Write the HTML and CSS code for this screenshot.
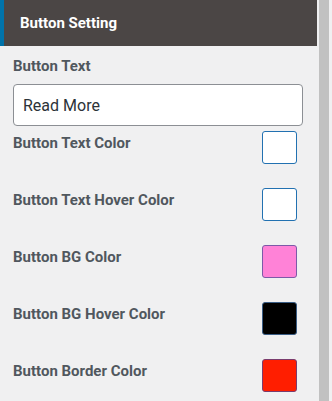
FILE: index.html
```html
<!DOCTYPE html>
<html>
<head>
    <title>Button Setting</title>
    <link rel="stylesheet" href="styles.css">
</head>
<body>
    <div class="panel">
        <div class="panel-head">Button Setting</div>
        <div class="panel-body">
            <label class="field-label" for="btnText">Button Text</label>
            <input id="btnText" class="text-input" value="Read More">

            <div class="color-row">
                <span class="field-label">Button Text Color</span>
                <span class="swatch swatch-white"></span>
            </div>
            <div class="color-row">
                <span class="field-label">Button Text Hover Color</span>
                <span class="swatch swatch-white"></span>
            </div>
            <div class="color-row">
                <span class="field-label">Button BG Color</span>
                <span class="swatch swatch-pink"></span>
            </div>
            <div class="color-row">
                <span class="field-label">Button BG Hover Color</span>
                <span class="swatch swatch-black"></span>
            </div>
            <div class="color-row">
                <span class="field-label">Button Border Color</span>
                <span class="swatch swatch-red"></span>
            </div>
        </div>
    </div>
    <div class="scrollbar"></div>
</body>
</html>
```

FILE: styles.css
```css
html, body {
    height: 100%;
}

body {
    margin: 0;
    padding: 0;
    background-color: #f0f0f1;
    font-family: Roboto, "Liberation Sans", Arial, sans-serif;
    display: flex;
    overflow: hidden;
}

.panel {
    width: 317px;
    flex: none;
}

.panel-head {
    height: 46px;
    box-sizing: border-box;
    background-color: #4b4645;
    border-left: 4px solid #0073aa;
    color: #fff;
    font-size: 15px;
    font-weight: 700;
    line-height: 46px;
    padding-left: 16px;
}

.panel-body {
    padding: 8px 0 0 13px;
}

.field-label {
    display: block;
    color: #50575e;
    font-size: 15px;
    font-weight: 700;
    line-height: 24px;
}

.text-input {
    display: block;
    box-sizing: border-box;
    width: 290px;
    height: 42px;
    margin-top: 6px;
    padding: 0 9px;
    border: 1px solid #8c8f94;
    border-radius: 4px;
    background: #fff;
    color: #2c3338;
    font-family: inherit;
    font-size: 16px;
    outline: none;
}

.color-row {
    display: flex;
    justify-content: space-between;
    align-items: flex-start;
    width: 284px;
    height: 57px;
    padding-top: 5px;
    box-sizing: border-box;
}

.color-row .field-label {
    margin-top: 0;
}

.swatch {
    width: 35px;
    height: 33px;
    box-sizing: border-box;
    border-radius: 3px;
    border: 1px solid #2271b1;
}

.swatch-white {
    background: #fff;
}

.swatch-pink {
    background: #ff82d7;
    border-color: #7c5aa8;
}

.swatch-black {
    background: #000;
    border-color: #3a5d85;
}

.swatch-red {
    background: #ff1e00;
    border-color: #7a3c6e;
}

.scrollbar {
    width: 10px;
    margin-left: 2px;
    background-color: #c1c1c1;
    flex: none;
}
```
